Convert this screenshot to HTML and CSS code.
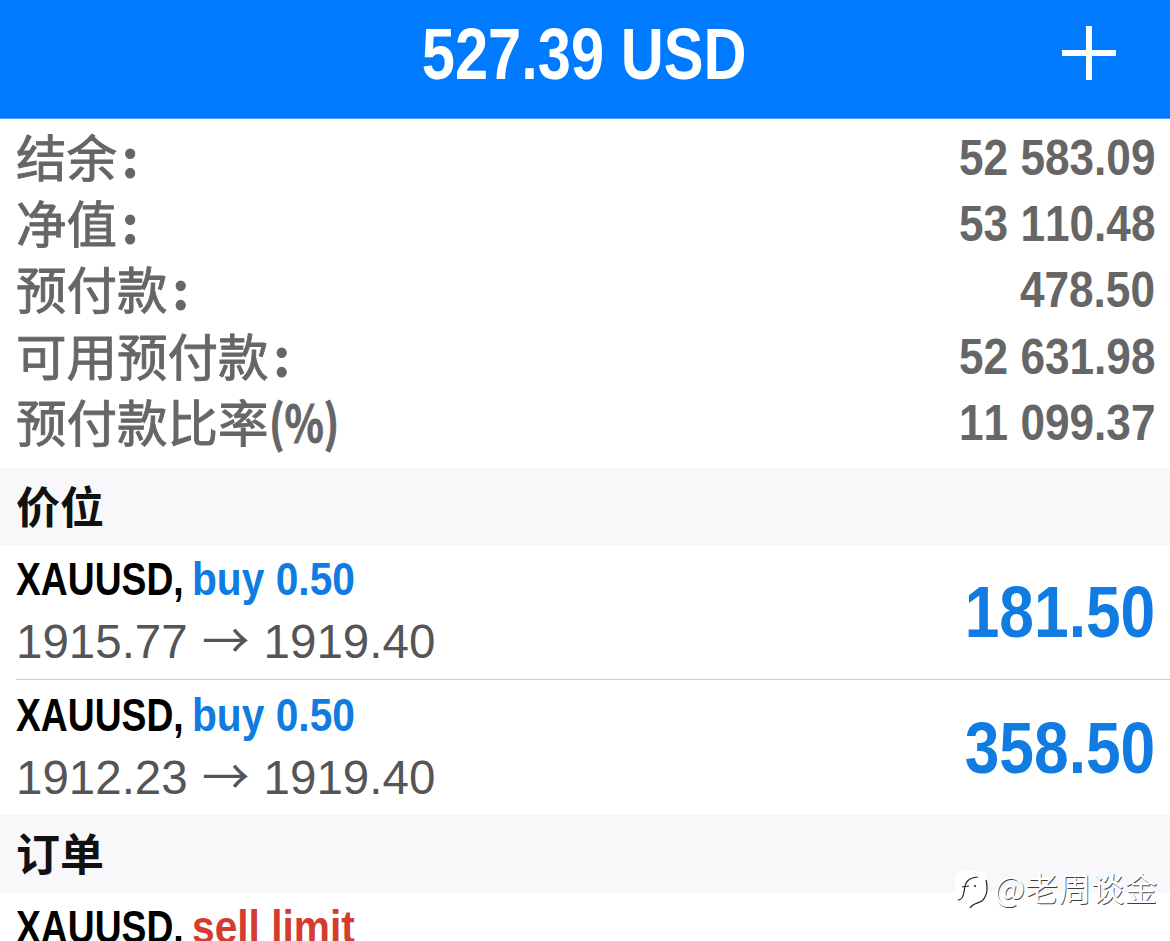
FILE: index.html
```html
<!doctype html>
<html>
    <head>
        <meta charset="utf-8">
        <meta name="viewport" content="width=device-width,initial-scale=1.0">
        <title>527.39 USD</title>
        <link rel="stylesheet" href="styles.css">
    </head>
    <body>
        <header class="topbar">
            <h1 class="total">527.39 USD</h1>
            <svg class="add" width="54" height="54" viewBox="0 0 54 54">
                <path d="M27 0V54M0 27H54" stroke="#fff" stroke-width="6" fill="none"/>
            </svg>
        </header>

        <section class="summary">
            <div class="line"><span class="name">结余<i class="colon">:</i></span><span class="val">52 583.09</span></div>
            <div class="line"><span class="name">净值<i class="colon">:</i></span><span class="val">53 110.48</span></div>
            <div class="line"><span class="name">预付款<i class="colon">:</i></span><span class="val">478.50</span></div>
            <div class="line"><span class="name">可用预付款<i class="colon">:</i></span><span class="val">52 631.98</span></div>
            <div class="line"><span class="name">预付款比率<i class="pct">(%)</i></span><span class="val">11 099.37</span></div>
        </section>

        <div class="group">价位</div>
        <div class="trade split">
            <div class="info">
                <div class="title"><span class="sym"><b>XAUUSD,</b></span><span class="buy">buy 0.50</span></div>
                <div class="prices">1915.77 <span class="arrow">→</span> 1919.40</div>
            </div>
            <div class="profit">181.50</div>
        </div>
        <div class="trade">
            <div class="info">
                <div class="title"><span class="sym"><b>XAUUSD,</b></span><span class="buy">buy 0.50</span></div>
                <div class="prices">1912.23 <span class="arrow">→</span> 1919.40</div>
            </div>
            <div class="profit">358.50</div>
        </div>

        <div class="group">订单</div>
        <div class="trade top">
            <div class="info">
                <div class="title"><span class="sym"><b>XAUUSD,</b></span><span class="sell">sell limit</span></div>
            </div>
            <div class="profit pending">2000.00</div>
        </div>

        <div class="mark">
            <svg width="35" height="40" viewBox="10 10 35 40">
                <rect x="10" y="11" width="32" height="28" rx="8" fill="#fff"/>
                <path d="M13 40C16 40 18 38 19 32S20 22 25 19C27 18 30 17 33 17M17 27L24 26M41 20C43 28 42 36 37 41C34 43 28 43 25 48" stroke="#222" stroke-width="1.2" fill="none"/>
                <circle cx="30" cy="26" r="1" fill="#222"/>
            </svg>
            <span class="mark-text">@老周谈金</span>
        </div>
    </body>
</html>
```

FILE: styles.css
```css
*{
    margin: 0px;
    padding: 0px;
    box-sizing: border-box;
}
html,body{
    height: 941px;
    overflow: hidden;
    background-color: #fff;
}
body{
    position: relative;
    font-family: "Liberation Sans", "Noto Sans CJK SC", sans-serif;
    font-kerning: none;
}
i{
    font-style: normal;
}
.topbar{
    position: relative;
    height: 119px;
    background-color: #007aff;
    display: flex;
    align-items: center;
    justify-content: center;
    border-bottom: 1px solid #4da2ff;
    padding: 0 2px 11px 0;
}
.total{
    font-size: 72px;
    font-weight: bold;
    color: #fff;
    transform: scaleX(.828);
}
.add{
    position: absolute;
    right: 54px;
    top: 26px;
}
.summary{
    padding: 6px 15px 12px 16px;
}
.line{
    display: flex;
    justify-content: space-between;
    align-items: center;
    height: 66.2px;
    color: #666;
    font-weight: bold;
}
.name{
    font-family: "Noto Sans CJK SC", sans-serif;
    font-size: 50.5px;
    font-weight: normal;
    -webkit-text-stroke: .9px #666;
    line-height: 60px;
    margin-top: -6px;
}
.colon{
    margin-left: 5px;
    font-weight: bold;
}
.pct{
    display: inline-block;
    font-weight: bold;
    transform: scaleX(.81);
    transform-origin: left;
}
.val{
    font-size: 50px;
    transform: scaleX(.883);
    transform-origin: right;
}
.group{
    height: 77.5px;
    background-color: #f8f8fa;
    padding: 0 0 4px 16px;
    display: flex;
    align-items: center;
    font-family: "Noto Sans CJK SC", sans-serif;
    font-size: 44px;
    font-weight: bold;
    color: #111;
}
.trade{
    height: 135px;
    margin-left: 16px;
    padding-right: 15px;
    display: flex;
    justify-content: space-between;
    align-items: center;
}
.split{
    border-bottom: 1px solid #ccc;
}
.top{
    align-items: flex-start;
    padding-top: 6px;
}
.title{
    display: flex;
    font-size: 46px;
    font-weight: bold;
    color: #000;
    line-height: 60px;
    white-space: nowrap;
    margin: -2px 0 2px;
}
.sym{
    width: 176px;
}
.sym b{
    display: inline-block;
    transform: scaleX(.81);
    transform-origin: left;
}
.buy{
    color: #107be0;
    transform: scaleX(.885);
    transform-origin: left;
}
.sell{
    color: #d33c2e;
    transform: scaleX(.885);
    transform-origin: left;
}
.prices{
    font-size: 47.5px;
    word-spacing: 1px;
    color: #555;
    line-height: 62px;
    white-space: nowrap;
}
.arrow{
    font-family: "Noto Sans CJK SC", sans-serif;
    line-height: 40px;
}
.profit{
    font-size: 72px;
    font-weight: bold;
    color: #107be0;
    transform: scaleX(.865);
    transform-origin: right;
}
.pending{
    font-size: 62px;
    color: #666;
    margin-top: 28px;
}
.mark{
    position: absolute;
    left: 955px;
    top: 870px;
    display: flex;
    gap: 4px;
}
.mark-text{
    font-family: "Noto Sans CJK SC", sans-serif;
    font-size: 33px;
    line-height: 34px;
    color: #fff;
    text-shadow: .7px .7px 0 rgba(0,0,0,.75);
}
```
